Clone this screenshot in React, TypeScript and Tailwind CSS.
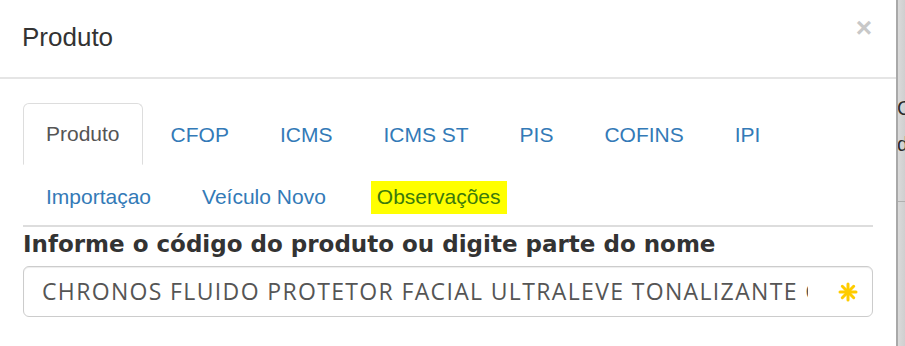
import React from 'react';

const tabsTop = ['Produto', 'CFOP', 'ICMS', 'ICMS ST', 'PIS', 'COFINS', 'IPI'];
const tabsBottom = ['Importaçao', 'Veículo Novo', 'Observações'];

const Tab: React.FC<{ label: string; active?: boolean; marked?: boolean; last?: boolean }> = ({
  label,
  active,
  marked,
  last,
}) => (
  <li className={last ? 'mr-[5px] -mb-[2px]' : 'mr-[5px]'}>
    <a
      className={
        active
          ? 'block h-[62px] px-[22px] pt-[18px] border-[1.5px] border-[#ddd] border-b-white bg-white rounded-t-[6px] text-[#555]'
          : 'block h-[62px] px-[22px] pt-[19px] border-[1.5px] border-transparent text-[#337ab7]'
      }
    >
      {marked ? (
        <span className="bg-[#ffff00] text-[#3b7a0c] -mx-[6px] px-[6px] pt-[4px] pb-[6px]">{label}</span>
      ) : (
        label
      )}
    </a>
  </li>
);

export default function App() {
  return (
    <div className="w-[905px] h-[346px] flex overflow-hidden bg-[#d2d2d2]" style={{ fontFamily: '"Liberation Sans", Arial, sans-serif' }}>
      {/* modal */}
      <div className="w-[898px] shrink-0 h-full bg-white border-r-2 border-[#a9a9a9] flex flex-col">
        <div className="h-[79px] shrink-0 border-b-2 border-[#e5e5e5] flex items-start justify-between pl-[22px] pr-[24px]">
          <h4 className="text-[26px] leading-none text-[#333] mt-[24px]">Produto</h4>
          <span className="text-[#c8c8c8] text-[28px] font-bold leading-none mt-[14px]">×</span>
        </div>

        <div className="pl-[23px] pr-[23px] pt-[24px]">
          <div className="border-b-2 border-[#ddd] text-[21px] leading-[24px]">
            <ul className="flex">
              {tabsTop.map((t, i) => (
                <Tab key={t} label={t} active={i === 0} />
              ))}
            </ul>
            <ul className="flex">
              {tabsBottom.map((t) => (
                <Tab key={t} label={t} marked={t === 'Observações'} last />
              ))}
            </ul>
          </div>

          <label
            className="block mt-[4px] text-[23px] font-bold text-[#333] leading-[27px]"
            style={{ fontFamily: '"DejaVu Sans", Verdana, sans-serif' }}
          >
            Informe o código do produto ou digite parte do nome
          </label>

          <div className="mt-[8px] h-[51px] border-[1.5px] border-[#ccc] rounded-[6px] shadow-[inset_0_1px_1px_rgba(0,0,0,0.075)] flex items-center pl-[18px] pr-[14px]">
            <div
              className="flex-1 overflow-hidden whitespace-nowrap text-[23px] tracking-[1.35px] text-[#555] mr-[30px]"
              style={{ fontFamily: '"Open Sans", sans-serif' }}
            >
              CHRONOS FLUIDO PROTETOR FACIAL ULTRALEVE TONALIZANTE COR MÉDIA FPS 60
            </div>
            <svg width="20" height="20" viewBox="0 0 20 20">
              <g stroke="#ffcc00" strokeWidth="3" strokeLinecap="round">
                <line x1="10" y1="2" x2="10" y2="18" />
                <line x1="2" y1="10" x2="18" y2="10" />
                <line x1="4.3" y1="4.3" x2="15.7" y2="15.7" />
                <line x1="4.3" y1="15.7" x2="15.7" y2="4.3" />
              </g>
            </svg>
          </div>
        </div>
      </div>

      {/* page behind the backdrop */}
      <div className="flex-1 overflow-hidden bg-gradient-to-r from-[#dadada] to-[#cfcfcf]">
        <div className="w-[60px] text-[#2a2a2a] text-[20px] leading-[24px] -ml-[1px] pt-[96px]">
          <div>C</div>
          <div className="mt-[12px]">d</div>
          <div className="mt-[45px] border-t border-[#b0b0b0]" />
        </div>
      </div>
    </div>
  );
}
